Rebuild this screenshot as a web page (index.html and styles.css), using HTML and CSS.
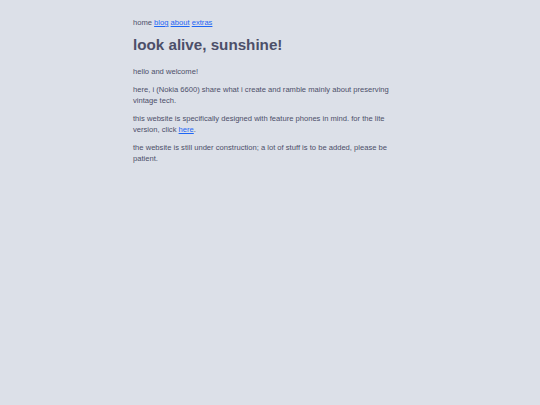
FILE: index.html
```html
<!DOCTYPE html>
<html lang="en">
<head>
    <meta charset="UTF-8">
    <meta name="viewport" content="width=device-width, initial-scale=1.0">
    <title>look alive, sunshine!</title>
    <link rel="stylesheet" href="styles.css">
</head>
<body>
    <div class="content">
        <nav class="nav">
            home <a href="#">blog</a> <a href="#">about</a> <a href="#">extras</a>
        </nav>
        <h1>look alive, sunshine!</h1>
        <p>hello and welcome!</p>
        <p>here, i (Nokia 6600) share what i create and ramble mainly about preserving vintage tech.</p>
        <p>this website is specifically designed with feature phones in mind. for the lite version, click <a href="#">here</a>.</p>
        <p>the website is still under construction; a lot of stuff is to be added, please be patient.</p>
    </div>
</body>
</html>
```
FILE: styles.css
```css
body {
    margin: 0;
    font-family: "Liberation Sans", Arial, sans-serif;
    font-size: 7.6px;
    line-height: 11px;
    background: #dce0e8;
    color: #4c4f69;
    min-height: 100vh;
}
.content {
    max-width: 274px;
    margin: 0 auto;
    padding-top: 17px;
}
.nav {
    margin: 0;
}
a {
    color: #1e66f5;
}
h1 {
    font-size: 15.2px;
    line-height: 21px;
    margin: 6px 0 11px;
}
p {
    margin: 7px 0;
}
```
